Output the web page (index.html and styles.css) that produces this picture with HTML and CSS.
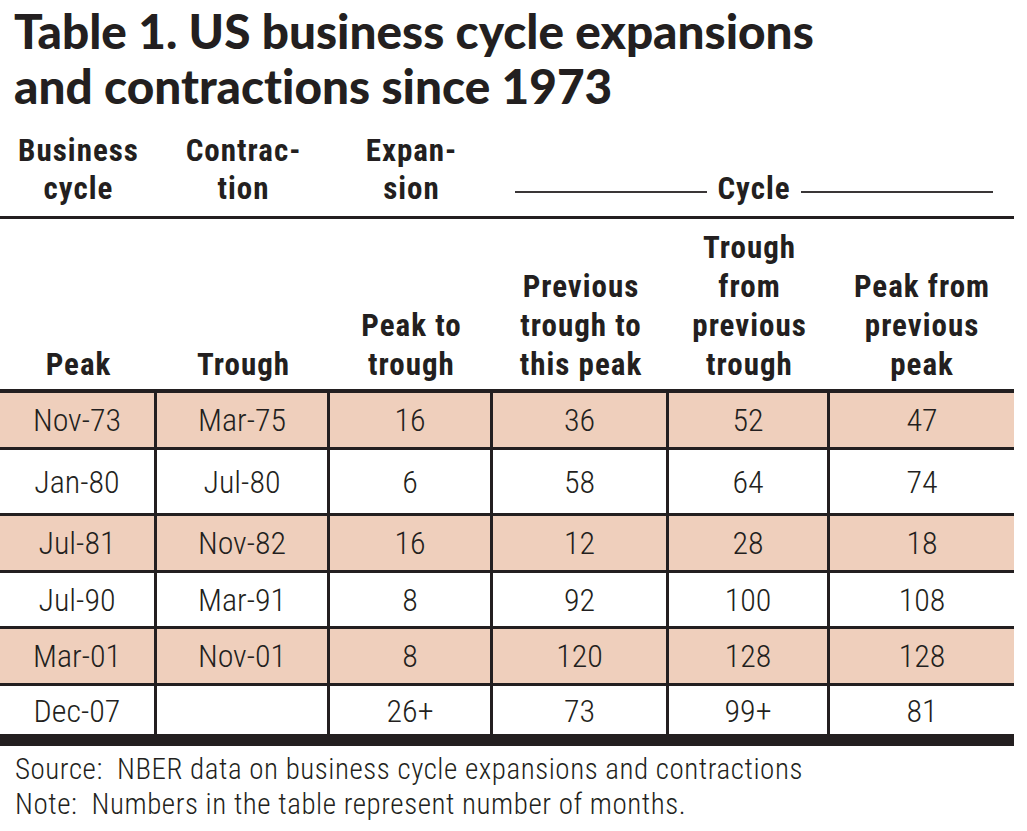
FILE: index.html
```html
<!DOCTYPE html>
<html lang="en">
<head>
<meta charset="utf-8">
<title>Table 1. US business cycle expansions and contractions since 1973</title>
<link rel="stylesheet" href="styles.css">
</head>
<body>
<h1 class="title">Table 1. US business cycle expansions<br>and contractions since 1973</h1>
<table class="cycles">
  <colgroup>
    <col class="w1"><col class="w2"><col class="w3"><col class="w4"><col class="w5"><col class="w6">
  </colgroup>
  <thead>
    <tr class="group">
      <th>Business<br>cycle</th>
      <th>Contrac-<br>tion</th>
      <th>Expan-<br>sion</th>
      <th colspan="3" class="span-cell"><div class="span-label"><span class="rule"></span><span class="span-text">Cycle</span><span class="rule"></span></div></th>
    </tr>
    <tr class="cols">
      <th>Peak</th>
      <th>Trough</th>
      <th>Peak to<br>trough</th>
      <th>Previous<br>trough to<br>this peak</th>
      <th>Trough<br>from<br>previous<br>trough</th>
      <th>Peak from<br>previous<br>peak</th>
    </tr>
  </thead>
  <tbody>
    <tr class="shade r1"><td>Nov-73</td><td>Mar-75</td><td>16</td><td>36</td><td>52</td><td>47</td></tr>
    <tr class="r2"><td>Jan-80</td><td>Jul-80</td><td>6</td><td>58</td><td>64</td><td>74</td></tr>
    <tr class="shade r3"><td>Jul-81</td><td>Nov-82</td><td>16</td><td>12</td><td>28</td><td>18</td></tr>
    <tr class="r4"><td>Jul-90</td><td>Mar-91</td><td>8</td><td>92</td><td>100</td><td>108</td></tr>
    <tr class="shade r5"><td>Mar-01</td><td>Nov-01</td><td>8</td><td>120</td><td>128</td><td>128</td></tr>
    <tr class="last r6"><td>Dec-07</td><td></td><td>26+</td><td>73</td><td>99+</td><td>81</td></tr>
  </tbody>
</table>
<div class="notes">
  <p>Source:  NBER data on business cycle expansions and contractions</p>
  <p>Note:  Numbers in the table represent number of months.</p>
</div>
</body>
</html>
```

FILE: styles.css
```css
html, body {
  margin: 0;
  padding: 0;
  background: #ffffff;
  color: #231f20;
}

body {
  width: 1027px;
  font-family: Roboto, "Open Sans", sans-serif;
  font-stretch: 75%;
}

.title {
  margin: 3px 0 0;
  padding-left: 14px;
  font-family: Lato, "Open Sans", sans-serif;
  font-stretch: 100%;
  font-weight: 900;
  font-size: 47.7px;
  line-height: 55px;
  font-variant-ligatures: none;
  font-feature-settings: "liga" 0, "dlig" 0;
  color: #231f20;
}

.cycles {
  margin-top: 19px;
  width: 1014px;
  table-layout: fixed;
  border-collapse: separate;
  border-spacing: 0;
}

.w1 { width: 157px; }
.w2 { width: 173px; }
.w3 { width: 163px; }
.w4 { width: 176px; }
.w5 { width: 161px; }
.w6 { width: 184px; }

.cycles th {
  padding: 0;
  font-weight: 700;
  font-size: 31px;
  letter-spacing: 1px;
  text-align: center;
  vertical-align: bottom;
  color: #231f20;
}

.group th {
  line-height: 38px;
  padding-bottom: 8px;
  border-bottom: 3px solid #231f20;
}

.span-cell {
  padding-left: 22px !important;
  padding-right: 21px !important;
}

.span-label {
  display: flex;
  align-items: center;
  gap: 10px;
}

.span-label .rule {
  flex: 1;
  height: 2px;
  background: #3a3637;
  margin-top: 6px;
}

.cols {
  height: 174px;
}

.cols th {
  line-height: 39px;
  padding-bottom: 5px;
  border-bottom: 4px solid #231f20;
}

.cycles td {
  padding: 0;
  font-size: 32px;
  font-weight: 300;
  text-align: center;
  vertical-align: middle;
  border-bottom: 3px solid #231f20;
  border-right: 3px solid #231f20;
  color: #231f20;
}

.cycles td:last-child {
  border-right: none;
}

.shade td {
  background: #efcfbc;
}

.r1 { height: 57px; }
.r2 { height: 66px; }
.r3 { height: 57px; }
.r4 { height: 56px; }
.r5 { height: 57px; }
.r6 { height: 60px; }

.last td {
  border-bottom-width: 12px;
  padding-top: 2px;
}

.notes {
  margin-top: 6px;
  padding-left: 15px;
}

.notes p {
  margin: 0;
  font-size: 29px;
  font-weight: 300;
  letter-spacing: 0.55px;
  line-height: 35px;
  white-space: pre;
}
```
